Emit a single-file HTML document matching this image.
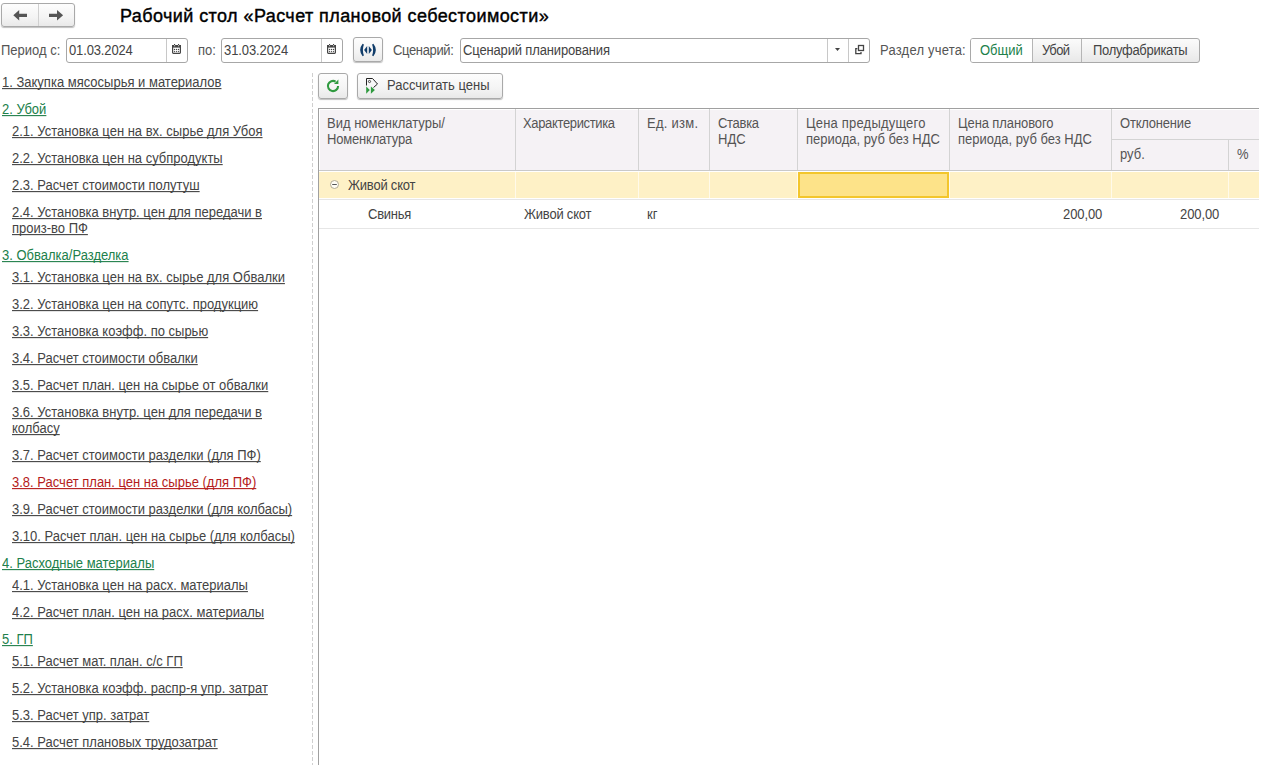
<!DOCTYPE html>
<html><head><meta charset="utf-8">
<style>
*{box-sizing:border-box;margin:0;padding:0}
html,body{width:1263px;height:765px;overflow:hidden;background:#fff}
body{position:relative;font-family:"Liberation Sans",sans-serif;font-size:13px;color:#444}
.a{position:absolute;white-space:nowrap}
.btn{position:absolute;border:1px solid #a9a9a9;border-radius:3px;background:linear-gradient(#fdfdfd,#f4f4f4 60%,#e9e9e9);box-shadow:0 1px 1px rgba(0,0,0,.25)}
.inp{position:absolute;border:1px solid #a7a7a7;border-radius:3px;background:#fff}
.lbl{color:#555}
.nav a{transform:scaleY(1.1);transform-origin:0 12.5px;position:absolute;white-space:nowrap;color:#444;text-decoration:underline;text-decoration-skip-ink:none;line-height:16px}
.nav a.g{color:#217f4b}
.nav a.r{color:#b51c1c}
.th{position:absolute;color:#555;line-height:16px;white-space:nowrap}
.vl{position:absolute;width:1px}
.t{transform:scaleY(1.1);transform-origin:0 12px}
.t2{transform:scaleY(1.1);transform-origin:0 12.5px}
.hl{position:absolute;height:1px}
</style></head><body>

<!-- nav back/forward -->
<div class="btn" style="left:1px;top:3px;width:74px;height:24px"></div>
<div class="vl" style="left:38px;top:4px;height:22px;background:#d0d0d0"></div>
<svg class="a" style="left:12px;top:9px" width="17" height="13" viewBox="0 0 17 13"><path d="M1.3 6.3 L7.2 1 V4.7 H15 V7.9 H7.2 V11.6 Z" fill="#555"/></svg>
<svg class="a" style="left:48px;top:9px" width="17" height="13" viewBox="0 0 17 13"><path d="M15.1 6.3 L9 1 V4.7 H1 V7.9 H9 V11.6 Z" fill="#555"/></svg>

<div class="a" style="left:120px;top:6px;font-size:18px;letter-spacing:0.42px;color:#000;-webkit-text-stroke:0.4px #000">Рабочий стол «Расчет плановой себестоимости»</div>

<!-- row 2 -->
<div class="t a lbl" style="left:1px;top:43px">Период с:</div>
<div class="inp" style="left:66px;top:38px;width:122px;height:25px"></div>
<div class="vl" style="left:166px;top:39px;height:23px;background:#c8c8c8"></div>
<div class="t a" style="left:69px;top:43px;letter-spacing:-0.14px">01.03.2024</div>

<div class="t a lbl" style="left:198px;top:43px">по:</div>
<div class="inp" style="left:221px;top:38px;width:122px;height:25px"></div>
<div class="vl" style="left:321px;top:39px;height:23px;background:#c8c8c8"></div>
<div class="t a" style="left:224px;top:43px;letter-spacing:-0.1px">31.03.2024</div>

<div class="btn" style="left:353px;top:37px;width:30px;height:25px"></div>

<div class="t a lbl" style="left:393px;top:43px;letter-spacing:-0.35px">Сценарий:</div>
<div class="inp" style="left:460px;top:38px;width:410px;height:25px"></div>
<div class="vl" style="left:827px;top:39px;height:23px;background:#c8c8c8"></div>
<div class="vl" style="left:848px;top:39px;height:23px;background:#c8c8c8"></div>
<div class="t a" style="left:463px;top:43px;letter-spacing:-0.15px">Сценарий планирования</div>

<div class="t a lbl" style="left:880px;top:43px;letter-spacing:0.2px">Раздел учета:</div>
<div class="a" style="left:970px;top:38px;width:230px;height:25px;border:1px solid #a9a9a9;border-radius:3px;overflow:hidden;background:linear-gradient(#fbfbfb,#f1f1f1 55%,#e8e8e8)">
<div class="a" style="left:0;top:0;width:62px;height:23px;background:#fff"></div>
<div class="vl" style="left:61px;top:0;height:23px;background:#b5b5b5"></div>
<div class="vl" style="left:110px;top:0;height:23px;background:#b5b5b5"></div>
</div>
<div class="t a" style="left:980px;top:43px;color:#217f4b">Общий</div>
<div class="t a" style="left:1042px;top:43px;letter-spacing:-0.6px">Убой</div>
<div class="t a" style="left:1093px;top:43px;letter-spacing:-0.3px">Полуфабрикаты</div>

<!-- nav list -->
<div class="nav">
<a style="left:2px;top:75px">1. Закупка мясосырья и материалов</a>
<a class="g" style="left:2px;top:102px">2. Убой</a>
<a style="left:12px;top:124px">2.1. Установка цен на вх. сырье для Убоя</a>
<a style="left:12px;top:151px">2.2. Установка цен на субпродукты</a>
<a style="left:12px;top:178px">2.3. Расчет стоимости полутуш</a>
<a style="left:12px;top:205px">2.4. Установка внутр. цен для передачи в</a>
<a style="left:12px;top:221px">произ-во ПФ</a>
<a class="g" style="left:2px;top:248px">3. Обвалка/Разделка</a>
<a style="left:12px;top:270px">3.1. Установка цен на вх. сырье для Обвалки</a>
<a style="left:12px;top:297px">3.2. Установка цен на сопутс. продукцию</a>
<a style="left:12px;top:324px">3.3. Установка коэфф. по сырью</a>
<a style="left:12px;top:351px">3.4. Расчет стоимости обвалки</a>
<a style="left:12px;top:378px">3.5. Расчет план. цен на сырье от обвалки</a>
<a style="left:12px;top:405px">3.6. Установка внутр. цен для передачи в</a>
<a style="left:12px;top:421px">колбасу</a>
<a style="left:12px;top:448px">3.7. Расчет стоимости разделки (для ПФ)</a>
<a class="r" style="left:12px;top:475px">3.8. Расчет план. цен на сырье (для ПФ)</a>
<a style="left:12px;top:502px">3.9. Расчет стоимости разделки (для колбасы)</a>
<a style="left:12px;top:529px">3.10. Расчет план. цен на сырье (для колбасы)</a>
<a class="g" style="left:2px;top:556px">4. Расходные материалы</a>
<a style="left:12px;top:578px">4.1. Установка цен на расх. материалы</a>
<a style="left:12px;top:605px">4.2. Расчет план. цен на расх. материалы</a>
<a class="g" style="left:2px;top:632px">5. ГП</a>
<a style="left:12px;top:654px">5.1. Расчет мат. план. с/с ГП</a>
<a style="left:12px;top:681px">5.2. Установка коэфф. распр-я упр. затрат</a>
<a style="left:12px;top:708px">5.3. Расчет упр. затрат</a>
<a style="left:12px;top:735px">5.4. Расчет плановых трудозатрат</a>
</div>

<!-- splitter -->
<div class="a" style="left:312px;top:73px;width:1px;height:692px;background:repeating-linear-gradient(#cfcfcf 0 4px,transparent 4px 6px)"></div>

<!-- right toolbar -->
<div class="btn" style="left:318px;top:73px;width:30px;height:26px"></div>
<div class="btn" style="left:357px;top:73px;width:146px;height:26px"></div>
<div class="t a" style="left:387px;top:78px">Рассчитать цены</div>

<!-- table -->
<div class="a" style="left:318px;top:108px;width:941px;height:657px;border-left:1px solid #a0a0a0;border-top:1px solid #a0a0a0"></div>
<div class="a" style="left:320px;top:110px;width:939px;height:60px;background:#f5f2f5"></div>
<div class="hl" style="left:319px;top:170px;width:940px;background:#c9c9c9"></div>
<div class="a" style="left:319px;top:172px;width:940px;height:26px;background:#fef1c6"></div>
<div class="hl" style="left:319px;top:199px;width:940px;background:#e6e6e6"></div>
<div class="hl" style="left:319px;top:228px;width:940px;background:#e6e6e6"></div>


<!-- header column dividers -->
<div class="vl" style="left:515px;top:109px;height:61px;background:#d3d3d3"></div>
<div class="vl" style="left:638px;top:109px;height:61px;background:#d3d3d3"></div>
<div class="vl" style="left:709px;top:109px;height:61px;background:#d3d3d3"></div>
<div class="vl" style="left:797px;top:109px;height:61px;background:#d3d3d3"></div>
<div class="vl" style="left:949px;top:109px;height:61px;background:#d3d3d3"></div>
<div class="vl" style="left:1111px;top:109px;height:61px;background:#d3d3d3"></div>
<div class="vl" style="left:1228px;top:139px;height:31px;background:#d3d3d3"></div>
<div class="hl" style="left:1112px;top:139px;width:147px;background:#d3d3d3"></div>
<!-- group row dividers (white) -->
<div class="vl" style="left:515px;top:172px;height:26px;background:#fffaea"></div>
<div class="vl" style="left:638px;top:172px;height:26px;background:#fffaea"></div>
<div class="vl" style="left:709px;top:172px;height:26px;background:#fffaea"></div>
<div class="vl" style="left:797px;top:172px;height:26px;background:#fffaea"></div>
<div class="vl" style="left:949px;top:172px;height:26px;background:#fffaea"></div>
<div class="vl" style="left:1111px;top:172px;height:26px;background:#fffaea"></div>
<div class="vl" style="left:1228px;top:172px;height:26px;background:#fffaea"></div>
<!-- selected cell -->
<div class="a" style="left:798px;top:172px;width:151px;height:26px;border:2px solid #f3c62c;background:#fde389"></div>

<div class="th t2" style="left:327px;top:116px">Вид номенклатуры/</div>
<div class="th t2" style="left:327px;top:132px;letter-spacing:-0.19px">Номенклатура</div>
<div class="th t2" style="left:523px;top:116px;letter-spacing:-0.35px">Характеристика</div>
<div class="th t2" style="left:647px;top:116px;letter-spacing:0.25px">Ед. изм.</div>
<div class="th t2" style="left:718px;top:116px;letter-spacing:-0.3px">Ставка</div>
<div class="th t2" style="left:718px;top:132px">НДС</div>
<div class="th t2" style="left:806px;top:116px;letter-spacing:0.19px">Цена предыдущего</div>
<div class="th t2" style="left:806px;top:132px">периода, руб без НДС</div>
<div class="th t2" style="left:958px;top:116px;letter-spacing:-0.1px">Цена планового</div>
<div class="th t2" style="left:958px;top:132px">периода, руб без НДС</div>
<div class="th t2" style="left:1120px;top:116px;letter-spacing:-0.2px">Отклонение</div>
<div class="th t2" style="left:1120px;top:147px">руб.</div>
<div class="th t2" style="left:1237px;top:147px">%</div>

<svg class="a" style="left:329px;top:179px" width="11" height="11" viewBox="0 0 11 11"><circle cx="5.5" cy="5.5" r="4" fill="#fffdf5" stroke="#b3ab95" stroke-width="1"/><path d="M3.2 5.5H7.8" stroke="#555" stroke-width="1"/></svg>
<div class="t a" style="left:348px;top:178px;color:#444;letter-spacing:-0.21px">Живой скот</div>
<div class="t a" style="left:368px;top:207px;color:#444;letter-spacing:-0.24px">Свинья</div>
<div class="t a" style="left:524px;top:207px;color:#444;letter-spacing:-0.21px">Живой скот</div>
<div class="t a" style="left:647px;top:207px;color:#444">кг</div>
<div class="t a" style="left:1063px;top:207px;color:#444;letter-spacing:-0.1px">200,00</div>
<div class="t a" style="left:1180px;top:207px;color:#444;letter-spacing:-0.1px">200,00</div>

<!-- icons -->
<svg class="a" style="left:171px;top:43px" width="11" height="12" viewBox="0 0 11 12"><rect x="1.6" y="2.6" width="7.8" height="7.8" rx="0.8" fill="none" stroke="#444" stroke-width="1.2"/><rect x="1" y="2" width="9" height="2.6" fill="#444"/><rect x="3" y="1" width="1.1" height="1.6" fill="#444"/><rect x="7" y="1" width="1.1" height="1.6" fill="#444"/><rect x="3" y="2.4" width="1.1" height="0.8" fill="#fff"/><rect x="7" y="2.4" width="1.1" height="0.8" fill="#fff"/><g fill="#444"><circle cx="3.5" cy="6.5" r="0.7"/><circle cx="5.5" cy="6.5" r="0.7"/><circle cx="7.5" cy="6.5" r="0.7"/><circle cx="3.5" cy="8.6" r="0.7"/><circle cx="5.5" cy="8.6" r="0.7"/><circle cx="7.5" cy="8.6" r="0.7"/></g></svg>
<svg class="a" style="left:326px;top:43px" width="11" height="12" viewBox="0 0 11 12"><rect x="1.6" y="2.6" width="7.8" height="7.8" rx="0.8" fill="none" stroke="#444" stroke-width="1.2"/><rect x="1" y="2" width="9" height="2.6" fill="#444"/><rect x="3" y="1" width="1.1" height="1.6" fill="#444"/><rect x="7" y="1" width="1.1" height="1.6" fill="#444"/><rect x="3" y="2.4" width="1.1" height="0.8" fill="#fff"/><rect x="7" y="2.4" width="1.1" height="0.8" fill="#fff"/><g fill="#444"><circle cx="3.5" cy="6.5" r="0.7"/><circle cx="5.5" cy="6.5" r="0.7"/><circle cx="7.5" cy="6.5" r="0.7"/><circle cx="3.5" cy="8.6" r="0.7"/><circle cx="5.5" cy="8.6" r="0.7"/><circle cx="7.5" cy="8.6" r="0.7"/></g></svg>
<svg class="a" style="left:358px;top:42px" width="20" height="16" viewBox="0 0 20 16"><g fill="#113d6a"><path d="M4.6 1.8 Q-0.3 8 4.6 14.2 L5.9 13.5 Q3.9 8 5.9 2.5 Z"/><path d="M15.4 1.8 Q20.3 8 15.4 14.2 L14.1 13.5 Q16.1 8 14.1 2.5 Z"/><path d="M9.2 4.1 L6.1 8 L9.2 11.9 Z"/><path d="M10.8 4.1 L13.9 8 L10.8 11.9 Z"/></g></svg>
<svg class="a" style="left:834px;top:47px" width="8" height="5" viewBox="0 0 8 5"><path d="M1 1H6L3.5 4Z" fill="#444"/></svg>
<svg class="a" style="left:854px;top:44px" width="12" height="12" viewBox="0 0 12 12"><rect x="4.5" y="1.5" width="5" height="5" fill="none" stroke="#444" stroke-width="1.3"/><path d="M3.4 4.6H1.8V9.6H7V8" fill="none" stroke="#444" stroke-width="1.3"/></svg>
<svg class="a" style="left:325px;top:78px" width="16" height="16" viewBox="0 0 16 16"><path d="M13.1 8 A5.1 5.1 0 1 1 10.6 3.6" fill="none" stroke="#2f9a3f" stroke-width="2.1"/><path d="M9 5.9 L13.4 1.6 L13.4 5.9 Z" fill="#2f9a3f"/></svg>
<svg class="a" style="left:364px;top:77px" width="16" height="18" viewBox="0 0 16 18"><path d="M2.5 8.5 V1.5 H8.5 L13.5 7 L9.5 10.5" fill="none" stroke="#222" stroke-width="1"/><circle cx="5.5" cy="4.5" r="1.1" fill="none" stroke="#333" stroke-width="0.9"/><path d="M2.2 9.4 L5.8 13.1 L2.2 16.8Z" fill="#2f9a3f"/><path d="M6.9 9.4 L10.9 13.1 L6.9 16.8Z" fill="#2f9a3f"/></svg>
</body></html>
